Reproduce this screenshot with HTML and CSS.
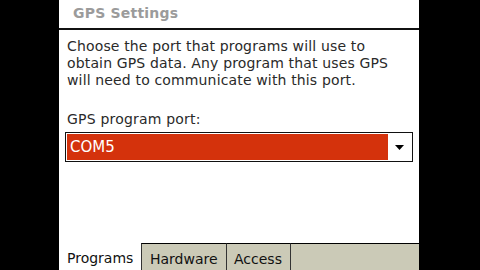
FILE: index.html
```html
<!DOCTYPE html>
<html>
<head>
  <link rel="stylesheet" href="styles.css">
</head>
<body>
  <div class="screen">
    <div class="title">GPS Settings</div>

    <div class="content">
      <p class="intro">Choose the port that programs will use to obtain GPS data. Any program that uses GPS will need to communicate with this port.</p>
      <div class="field-label">GPS program port:</div>
      <div class="combo">
        <div class="combo-value">COM5</div>
        <div class="combo-button">
          <svg width="9" height="5" viewBox="0 0 9 5"><path d="M0 0h9L4.5 5z" fill="#000"/></svg>
        </div>
      </div>
    </div>

    <div class="tabs">
      <div class="tab active">Programs</div>
      <div class="tab hardware">Hardware</div>
      <div class="tab access">Access</div>
      <div class="tab rest"></div>
    </div>
  </div>
</body>
</html>
```

FILE: styles.css
```css
body {
  margin: 0;
  background: #000;
  font-family: "DejaVu Sans", Verdana, sans-serif;
  overflow: hidden;
}

.screen {
  width: 360px;
  height: 270px;
  margin-left: 59px;
  background: #fff;
  display: flex;
  flex-direction: column;
}

.title {
  height: 28px;
  padding-left: 14px;
  line-height: 26px;
  font-size: 14px;
  letter-spacing: 0.2px;
  font-weight: bold;
  color: #9b9b9b;
  border-bottom: 2px solid #111;
}

.content {
  flex: 1;
  padding: 8px 6px 0 6px;
  color: #2a2a2a;
  font-size: 14px;
}

.intro {
  margin: 0 0 0 2px;
  width: 340px;
  line-height: 17px;
  letter-spacing: 0.15px;
}

.field-label {
  margin: 22px 0 0 2px;
  line-height: 17px;
  letter-spacing: 0.2px;
}

.combo {
  margin-top: 4px;
  border: 1px solid #111;
  display: flex;
  padding: 1px;
  box-sizing: border-box;
  height: 30px;
}

.combo-value {
  flex: 1;
  background: #d4320c;
  color: #fff;
  font-size: 15px;
  line-height: 26px;
  padding-left: 3px;
}

.combo-button {
  width: 23px;
  display: flex;
  align-items: center;
  justify-content: center;
}

.tabs {
  height: 27px;
  display: flex;
  background: #cbcab7;
  font-size: 14px;
  color: #111;
}

.tab {
  line-height: 26px;
  padding-top: 2px;
  box-sizing: border-box;
}

.tab.active {
  width: 82px;
  background: #fff;
  padding-left: 8px;
}

.hardware,
.access,
.rest {
  border-top: 1px solid #000;
  border-left: 1px solid #333;
}

.hardware {
  width: 85px;
  padding-left: 8px;
}

.access {
  width: 64px;
  padding-left: 7px;
}

.rest {
  flex: 1;
}
```
